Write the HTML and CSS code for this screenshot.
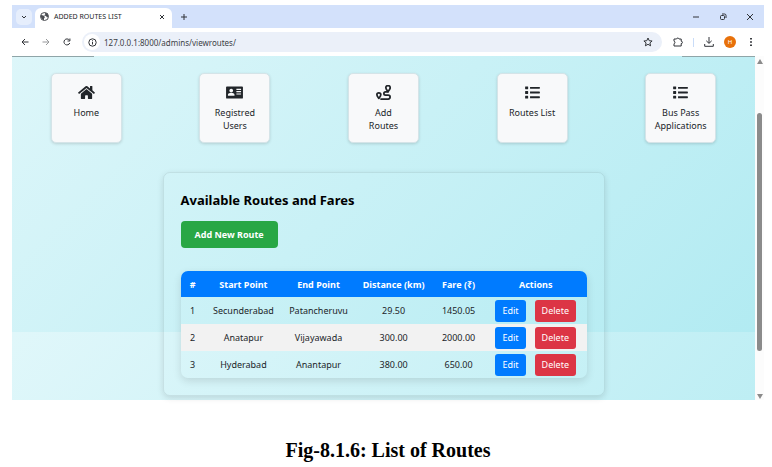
FILE: index.html
```html
<!DOCTYPE html>
<html lang="en">
<head>
<meta charset="utf-8">
<meta name="viewport" content="width=device-width, initial-scale=1">
<title>ADDED ROUTES LIST</title>
<link rel="stylesheet" href="styles.css">
</head>
<body>
<figure class="figure">
  <div class="window">
    <header class="tabbar">
      <button class="tab-search" aria-label="Search tabs"><svg width="6" height="6" viewBox="0 0 6 6"><path d="M1 2l2 2 2-2" class="line"/></svg></button>
      <div class="tab">
        <svg width="9" height="9" viewBox="0 0 18 18"><circle cx="9" cy="9" r="8" fill="#fff" stroke="#4a4d52" stroke-width="2"/><path fill="#4a4d52" d="M2 6l5 1 3 3-2 3v4l-4-3-3-5zM8 1l7 2 2 6-3 2-2-3-4-1 3-3z"/></svg>
        <span class="tab-title">ADDED ROUTES LIST</span>
        <button class="plain" aria-label="Close tab"><svg width="6" height="6" viewBox="0 0 6 6"><path d="M1 1l4 4M5 1l-4 4" class="line"/></svg></button>
      </div>
      <button class="plain" aria-label="New tab"><svg width="8" height="8" viewBox="0 0 8 8"><path d="M4 1v6M1 4h6" class="line"/></svg></button>
      <div class="window-controls">
        <button class="plain" aria-label="Minimize"><svg width="8" height="8" viewBox="0 0 8 8"><path d="M1 4h6" class="line"/></svg></button>
        <button class="plain" aria-label="Restore"><svg width="8" height="8" viewBox="0 0 8 8"><rect x="1.5" y="2.5" width="4" height="4" rx="1" class="line"/><path d="M3 1h2.500a1.500 1.500 0 0 1 1.500 1.500V5" class="line"/></svg></button>
        <button class="plain" aria-label="Close"><svg width="8" height="8" viewBox="0 0 8 8"><path d="M1 1l6 6M7 1L1 7" class="line"/></svg></button>
      </div>
    </header>
    <div class="toolbar">
      <button class="plain" aria-label="Back"><svg width="8" height="8" viewBox="0 0 8 8"><path d="M7.500 4H1M4 1L1 4l3 3" class="line"/></svg></button>
      <button class="plain muted" aria-label="Forward"><svg width="8" height="8" viewBox="0 0 8 8"><path d="M.5 4H7M4 1l3 3-3 3" class="line"/></svg></button>
      <button class="plain" aria-label="Reload"><svg width="8" height="8" viewBox="0 0 8 8"><path d="M6.800 5A3 3 0 1 1 6.300 2M6.900.500V3H4.500" class="line"/></svg></button>
      <div class="omnibox">
        <span class="site-info"><svg width="9" height="9" viewBox="0 0 9 9"><circle cx="4.500" cy="4.500" r="3.700" class="line"/><path d="M4.500 4v2.500M4.500 2.300v1" class="line"/></svg></span>
        <input class="address" type="text" aria-label="Address" value="127.0.0.1:8000/admins/viewroutes/">
        <button class="plain" aria-label="Bookmark"><svg width="10" height="10" viewBox="0 0 10 10"><path d="M5 1l1.200 2.700 2.900.3-2.200 1.900.7 2.900L5 7.300 2.400 8.800l.7-2.900L.9 4l2.900-.3z" class="line"/></svg></button>
      </div>
      <button class="plain" aria-label="Extensions"><svg width="10" height="10" viewBox="0 0 10 10"><path d="M1 2h2.500a1.300 1.300 0 0 1 2.500 0h2.200v2.200a1.200 1.200 0 0 1 0 2.400V9H1V6.700a1.300 1.300 0 0 0 0-2.500z" class="line"/></svg></button>
      <span class="divider"></span>
      <button class="plain" aria-label="Downloads"><svg width="10" height="10" viewBox="0 0 10 10"><path d="M5 0v6M2.300 3.800L5 6.400l2.700-2.600M.7 7v2.300h8.600V7" class="line"/></svg></button>
      <button class="avatar">H</button>
      <button class="plain" aria-label="Menu"><svg width="4" height="10" viewBox="0 0 4 10"><path fill="#3a3d41" d="M1 1h2v1.600H1zM1 4.200h2v1.600H1zM1 7.400h2V9H1z"/></svg></button>
    </div>
    <div class="viewport">
      <main class="page">
        <nav class="cards">
          <a class="card" href="#"><svg width="17" height="15" viewBox="0 0 576 512"><path d="M280 149L96 300v164a16 16 0 0 0 16 16h112a16 16 0 0 0 16-16v-96a16 16 0 0 1 16-16h64a16 16 0 0 1 16 16v96a16 16 0 0 0 16 16h112a16 16 0 0 0 16-16V300L296 149a12 12 0 0 0-16 0zM571 252L488 183V44a12 12 0 0 0-12-12h-56a12 12 0 0 0-12 12v73L318 43a48 48 0 0 0-61 0L4 252a12 12 0 0 0-2 17l26 31a12 12 0 0 0 17 2l235-194a12 12 0 0 1 16 0l235 194a12 12 0 0 0 17-2l25-31a12 12 0 0 0-2-17z"/></svg><span>Home</span></a>
          <a class="card" href="#"><svg width="17" height="15" viewBox="0 0 576 512"><path fill-rule="evenodd" d="M30 48h516a30 30 0 0 1 30 30v356a30 30 0 0 1-30 30H30a30 30 0 0 1-30-30V78a30 30 0 0 1 30-30zM176 128a64 64 0 1 0 .1 0zM64 364h224v-28c0-38-34-64-68-64h-88c-34 0-68 26-68 64zM352 128v40h160v-40zM352 208v40h160v-40zM352 288v40h160v-40z"/></svg><span>Registred<br>Users</span></a>
          <a class="card" href="#"><svg width="15" height="15" viewBox="0 0 512 512"><g fill="none" stroke="#212529" stroke-width="60" stroke-linejoin="round" stroke-linecap="round"><path d="M410 225c-45-55-75-90-75-128a75 75 0 0 1 150 0c0 38-30 73-75 128zM97 455c-45-55-67-82-67-120a67 67 0 0 1 134 0c0 38-22 65-67 120z"/><path d="M405 235h-80a55 55 0 0 0 0 112h90a65 65 0 0 1 0 133H170"/></g></svg><span>Add<br>Routes</span></a>
          <a class="card" href="#"><svg width="15" height="15" viewBox="0 0 512 512"><path d="M16 48h80a12 12 0 0 1 12 12v72a12 12 0 0 1-12 12H16a12 12 0 0 1-12-12V60a12 12 0 0 1 12-12zM16 208h80a12 12 0 0 1 12 12v72a12 12 0 0 1-12 12H16a12 12 0 0 1-12-12v-72a12 12 0 0 1 12-12zM16 368h80a12 12 0 0 1 12 12v72a12 12 0 0 1-12 12H16a12 12 0 0 1-12-12v-72a12 12 0 0 1 12-12zM172 64h320a16 16 0 0 1 16 16v32a16 16 0 0 1-16 16H172zM172 224h320a16 16 0 0 1 16 16v32a16 16 0 0 1-16 16H172zM172 384h320a16 16 0 0 1 16 16v32a16 16 0 0 1-16 16H172z"/></svg><span>Routes List</span></a>
          <a class="card" href="#"><svg width="15" height="15" viewBox="0 0 512 512"><path d="M16 48h80a12 12 0 0 1 12 12v72a12 12 0 0 1-12 12H16a12 12 0 0 1-12-12V60a12 12 0 0 1 12-12zM16 208h80a12 12 0 0 1 12 12v72a12 12 0 0 1-12 12H16a12 12 0 0 1-12-12v-72a12 12 0 0 1 12-12zM16 368h80a12 12 0 0 1 12 12v72a12 12 0 0 1-12 12H16a12 12 0 0 1-12-12v-72a12 12 0 0 1 12-12zM172 64h320a16 16 0 0 1 16 16v32a16 16 0 0 1-16 16H172zM172 224h320a16 16 0 0 1 16 16v32a16 16 0 0 1-16 16H172zM172 384h320a16 16 0 0 1 16 16v32a16 16 0 0 1-16 16H172z"/></svg><span>Bus Pass<br>Applications</span></a>
        </nav>
        <section class="panel">
          <h1>Available Routes and Fares</h1>
          <a class="add" href="#">Add New Route</a>
          <table class="routes">
            <colgroup><col class="c-num"><col class="c-start"><col class="c-end"><col class="c-dist"><col class="c-fare"><col></colgroup>
            <thead>
              <tr><th>#</th><th>Start Point</th><th>End Point</th><th>Distance (km)</th><th>Fare (₹)</th><th>Actions</th></tr>
            </thead>
            <tbody>
              <tr><td>1</td><td>Secunderabad</td><td>Patancheruvu</td><td>29.50</td><td>1450.05</td><td><div class="actions"><a class="edit" href="#">Edit</a><a class="delete" href="#">Delete</a></div></td></tr>
              <tr><td>2</td><td>Anatapur</td><td>Vijayawada</td><td>300.00</td><td>2000.00</td><td><div class="actions"><a class="edit" href="#">Edit</a><a class="delete" href="#">Delete</a></div></td></tr>
              <tr><td>3</td><td>Hyderabad</td><td>Anantapur</td><td>380.00</td><td>650.00</td><td><div class="actions"><a class="edit" href="#">Edit</a><a class="delete" href="#">Delete</a></div></td></tr>
            </tbody>
          </table>
        </section>
      </main>
      <div class="scrollbar">
        <svg width="6" height="5" viewBox="0 0 6 5"><path fill="#8b8b8b" d="M3 0l3 5H0z"/></svg>
        <div class="track"><div class="thumb"></div></div>
        <svg width="6" height="5" viewBox="0 0 6 5"><path fill="#8b8b8b" d="M0 0h6L3 5z"/></svg>
      </div>
    </div>
  </div>
  <figcaption>Fig-8.1.6: List of Routes</figcaption>
</figure>
</body>
</html>
```
FILE: styles.css
```css
* { box-sizing: border-box; }

body {
  margin: 0;
  background: #fff;
  font-family: "Noto Sans", "Open Sans", sans-serif;
  font-size: 9px;
  color: #212529;
}

a { color: inherit; text-decoration: none; }
button { border: 0; padding: 0; font: inherit; color: inherit; }
svg { display: block; flex: none; }

.figure { margin: 0; padding: 5px 8px 0 12px; }

.line {
  fill: none;
  stroke: #303338;
  stroke-width: 1;
}

.plain { background: none; }
.muted { opacity: 0.5; }

/* Browser frame */
.tabbar {
  display: flex;
  align-items: center;
  height: 23px;
  padding-left: 4px;
  background: #d3e1fb;
}

.tab-search {
  display: flex;
  align-items: center;
  justify-content: center;
  width: 16px;
  height: 16px;
  border-radius: 5px;
  background: #e6eefc;
}

.tab {
  display: flex;
  align-items: center;
  align-self: flex-end;
  gap: 5px;
  width: 137px;
  height: 20px;
  margin: 0 8px 0 3px;
  padding: 0 7px 3px 5px;
  border-radius: 6px 6px 0 0;
  background: #fff;
}

.tab-title { flex: 1; font-size: 7px; white-space: nowrap; }

.window-controls {
  display: flex;
  gap: 19px;
  margin-left: auto;
  padding-right: 10px;
}

.toolbar {
  display: flex;
  align-items: center;
  gap: 13px;
  height: 28px;
  padding: 0 11px 0 9px;
  background: #fff;
}

.omnibox {
  display: flex;
  flex: 1;
  align-items: center;
  height: 20px;
  margin: 0 -2px;
  padding: 0 9px 0 2px;
  border-radius: 10px;
  background: #ebf0f9;
}

.site-info {
  display: flex;
  align-items: center;
  justify-content: center;
  width: 16px;
  height: 16px;
  border-radius: 8px;
  background: #fff;
}

.address {
  flex: 1;
  min-width: 0;
  padding: 0 0 0 4px;
  border: 0;
  background: none;
  font: inherit;
  font-size: 8px;
  color: #3c4046;
}

.divider { width: 1px; height: 9px; margin: 0 -3px; background: #c9dcf8; }

.avatar {
  width: 12px;
  height: 12px;
  margin-left: -3px;
  border-radius: 6px;
  background: #e8710a;
  color: #fff;
  font-size: 6px;
  line-height: 12px;
}

/* Page */
.viewport { display: flex; }

.page {
  flex: 1;
  min-width: 0;
  padding: 17px 0 4px;
  background: linear-gradient(135deg, #e0f7fa, #b2ebf2) 0 -68px / 100% 344px;
}

.page::before {
  content: "";
  display: block;
  height: 1px;
  margin: -17px 0 16px;
  background: linear-gradient(90deg, #8fa5a8 82px, transparent 82px calc(100% - 73px), #8fa5a8 0);
}

.cards { display: flex; justify-content: space-around; }

.card {
  display: flex;
  flex-direction: column;
  align-items: center;
  gap: 6px;
  width: 71px;
  height: 70px;
  padding-top: 11px;
  border: 1px solid #d5e4e8;
  border-radius: 5px;
  background: #f8f9fa;
  box-shadow: 0 1px 3px rgba(0, 0, 0, 0.15);
  line-height: 13px;
  text-align: center;
}

.card svg { fill: #212529; }

.panel {
  max-width: 442px;
  margin: 29px auto 0;
  padding: 17px;
  border: 1px solid rgba(0, 0, 0, 0.08);
  border-radius: 7px;
  box-shadow: 0 2px 6px rgba(0, 0, 0, 0.12);
}

h1 {
  margin: 0 0 10px;
  font-size: 13px;
  line-height: 21px;
  color: #000;
}

.add {
  display: block;
  width: max-content;
  padding: 0 14px;
  border-radius: 4px;
  background: #28a745;
  color: #fff;
  font-weight: bold;
  line-height: 27px;
}

.routes {
  width: 100%;
  margin-top: 23px;
  border-spacing: 0;
  border-radius: 7px;
  overflow: hidden;
  table-layout: fixed;
  box-shadow: 0 3px 9px rgba(0, 0, 0, 0.12);
  text-align: center;
}

.c-num { width: 6%; }
.c-start { width: 19%; }
.c-end { width: 18%; }
.c-dist { width: 19%; }
.c-fare { width: 13%; }

th, td { padding: 0; white-space: nowrap; }
th { height: 26px; background: #007bff; color: #fff; }
td { height: 27px; }
tbody tr:nth-child(even) { background: #f2f2f2; }

.actions { display: flex; justify-content: center; gap: 9px; color: #fff; line-height: 22px; }
.edit, .delete { padding: 0 7px; border-radius: 3px; }
.edit { background: #007bff; }
.delete { background: #dc3545; }

.scrollbar {
  display: flex;
  flex-direction: column;
  align-items: center;
  width: 9px;
  padding: 3px 0 1px;
  background: #fcfcfc;
}

.track { flex: 1; width: 5px; padding: 49px 0 43px; }
.thumb { height: 100%; border-radius: 3px; background: #8b8b8b; }

figcaption {
  margin-top: 38px;
  font: bold 20px/24px "Liberation Serif", serif;
  color: #000;
  text-align: center;
}
```
